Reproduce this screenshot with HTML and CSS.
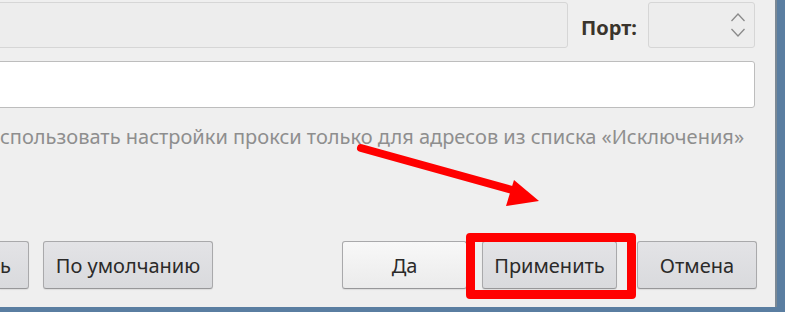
FILE: index.html
```html
<!DOCTYPE html>
<html lang="ru">
<head>
<meta charset="utf-8">
<title>Прокси</title>
<link rel="stylesheet" href="styles.css">
</head>
<body>
<div class="frame">
  <div class="content">
    <div class="host-row">
      <div class="field disabled host"></div>
      <label class="port-label">Порт:</label>
      <div class="field disabled spin">
        <svg class="spin-arrows" width="16" height="26" viewBox="0 0 16 26">
          <polyline points="1.5,9 8,2 14.5,9" fill="none" stroke="#8a8a8a" stroke-width="1.3"/>
          <polyline points="1.5,17 8,24 14.5,17" fill="none" stroke="#8a8a8a" stroke-width="1.3"/>
        </svg>
      </div>
    </div>
    <div class="field white"></div>
    <p class="hint">спользовать настройки прокси только для адресов из списка «Исключения»</p>
    <div class="buttons">
      <button class="btn cut">ь</button>
      <button class="btn defaults">По умолчанию</button>
      <div class="spacer"></div>
      <button class="btn primary yes">Да</button>
      <button class="btn apply">Применить</button>
      <button class="btn cancel">Отмена</button>
    </div>
  </div>
  <div class="highlight"></div>
  <svg class="arrow" width="785" height="312" viewBox="0 0 785 312">
    <line x1="361" y1="148" x2="516" y2="191" stroke="#ff0000" stroke-width="8" stroke-linecap="round"/>
    <polygon points="514,180 539,201 506,206" fill="#ff0000"/>
  </svg>
</div>
</body>
</html>
```
FILE: styles.css
```css
html, body {
  margin: 0;
  padding: 0;
}
body {
  width: 785px;
  height: 312px;
  overflow: hidden;
  background: #efefef;
  font-family: "Noto Sans", "Open Sans", sans-serif;
  font-size: 20px;
  color: #2f3235;
}
.frame {
  position: relative;
  width: 785px;
  height: 312px;
  box-sizing: border-box;
  border-right: 8px solid #5a7ea1;
  border-bottom: 5px solid #5a7ea1;
  background: #efefef;
}
.content {
  height: 100%;
  box-sizing: border-box;
  border-right: 2px solid #7b8894;
  padding-top: 2px;
  display: flex;
  flex-direction: column;
  overflow: hidden;
}
.host-row {
  display: flex;
  align-items: center;
  height: 46px;
  padding-right: 20px;
}
.field {
  box-sizing: border-box;
  border-radius: 3px;
}
.disabled {
  height: 46px;
  border: 1px solid #d6d6d6;
  background: #ededed;
}
.host {
  flex: 1;
  margin-left: -6px;
}
.port-label {
  margin-left: 13px;
  margin-right: 11px;
  font-size: 20px;
  font-weight: 700;
  color: #3a342c;
  position: relative;
  top: 2px;
}
.spin {
  width: 107px;
  display: flex;
  align-items: center;
  justify-content: flex-end;
  padding-right: 8px;
}
.spin-arrows {
  display: block;
}
.white {
  margin-top: 13px;
  margin-left: -6px;
  margin-right: 20px;
  height: 47px;
  border: 1px solid #bdbdbd;
  background: #ffffff;
}
.hint {
  margin: 16px 0 0 0;
  line-height: 26px;
  color: #8e8e8e;
  white-space: nowrap;
}
.buttons {
  margin-top: auto;
  margin-bottom: 18px;
  display: flex;
  align-items: stretch;
  height: 48px;
  padding-right: 18px;
}
.btn {
  box-sizing: border-box;
  height: 48px;
  font-family: inherit;
  font-size: 20px;
  color: #2b2a29;
  border: 1px solid #a9a9ab;
  border-bottom-color: #979799;
  border-radius: 3px;
  background: linear-gradient(#e3e3e6, #d9dadd);
  box-shadow: 0 1px 1px rgba(0,0,0,0.08);
  padding: 0;
  display: flex;
  align-items: center;
  justify-content: center;
}
.cut {
  width: 29px;
  border-left: none;
  border-radius: 0 3px 3px 0;
  justify-content: flex-start;
}
.defaults {
  width: 170px;
  margin-left: 14px;
}
.spacer {
  flex: 1;
}
.primary {
  background: linear-gradient(#f8f8f8, #ebebeb);
}
.yes {
  width: 125px;
}
.apply {
  width: 135px;
  margin-left: 15px;
}
.cancel {
  width: 120px;
  margin-left: 20px;
}
.highlight {
  position: absolute;
  left: 466px;
  top: 233px;
  width: 170px;
  height: 66px;
  box-sizing: border-box;
  border: 9px solid #ff0000;
  border-radius: 4px;
}
.arrow {
  position: absolute;
  left: 0;
  top: 0;
  pointer-events: none;
}
```
